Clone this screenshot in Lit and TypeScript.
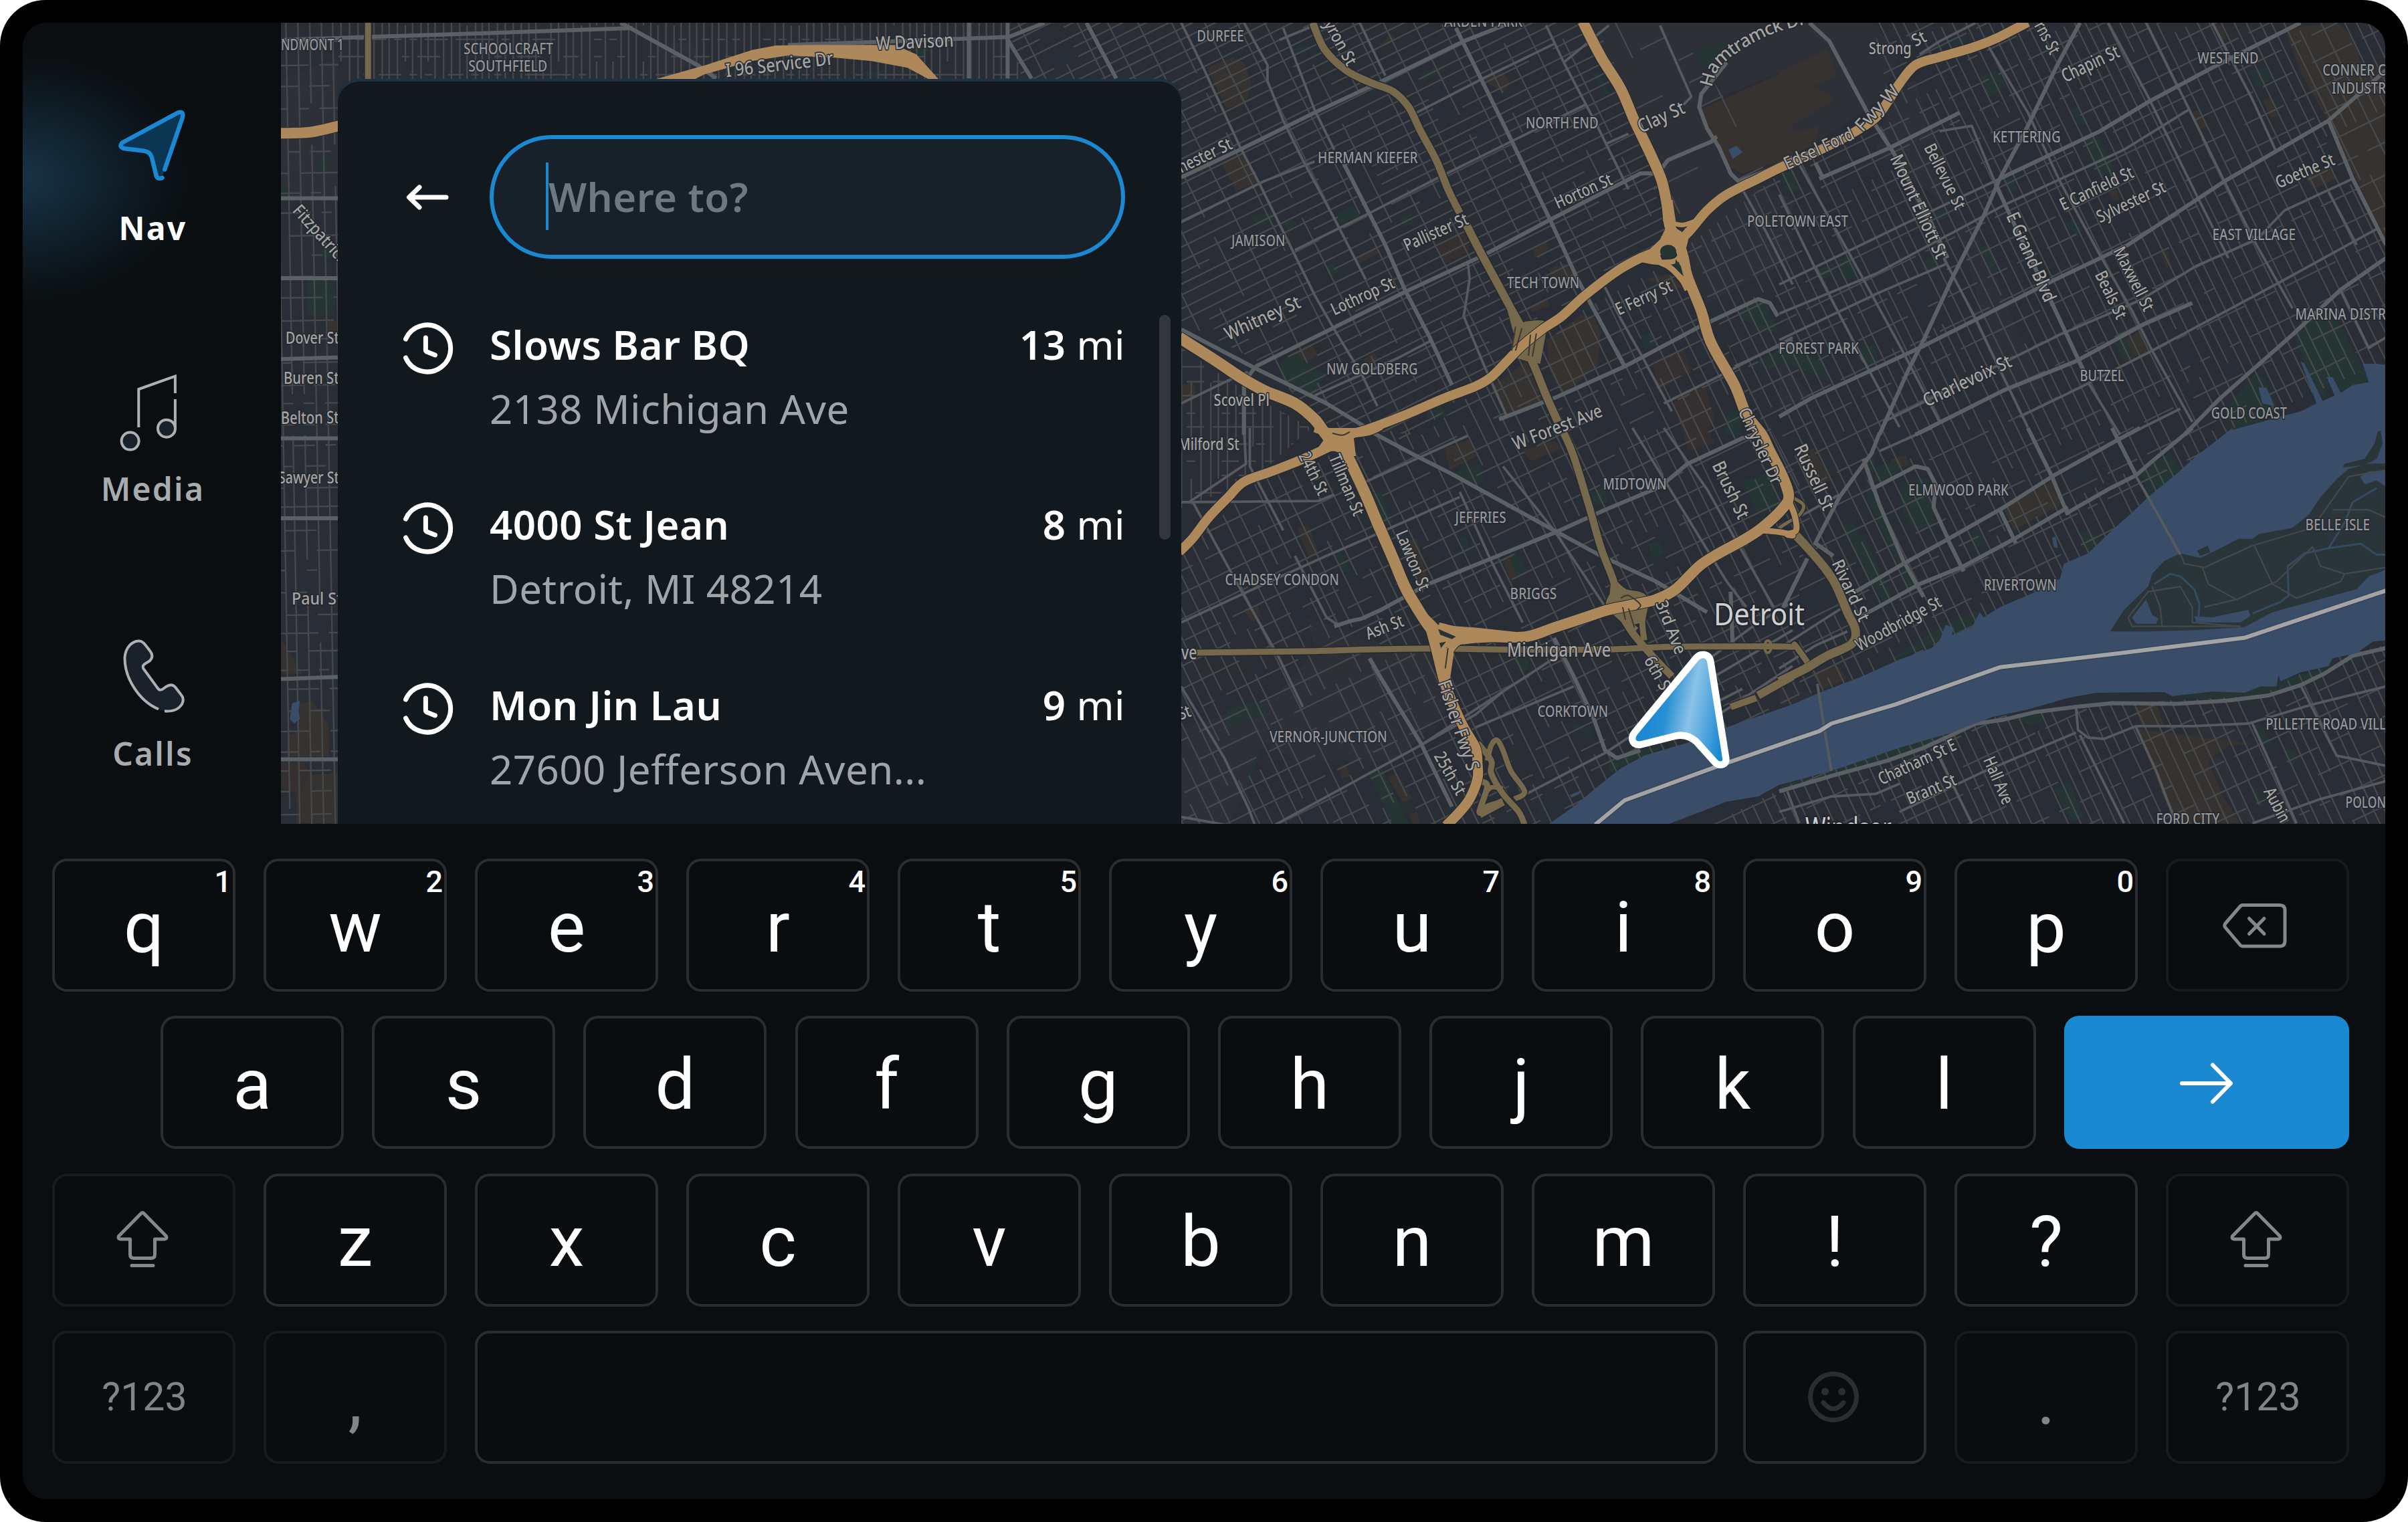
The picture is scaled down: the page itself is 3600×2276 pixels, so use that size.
import { LitElement, html, css, svg } from "lit";
import { customElement } from "lit/decorators.js";
import { classMap } from "lit/directives/class-map.js";

/* ------------------------------------------------------------------ */
/* Map geometry                                                        */
/* ------------------------------------------------------------------ */

type Pt = [number, number];

// Map sheets: origin and scale from sheet units to screen units.
const SHEETS: Record<string, [number, number, number, number]> = {
  A: [1760, 30, 920 / 1568, 620 / 1568],
  B: [2660, 30, 940 / 1568, 620 / 1568],
  C: [1760, 640, 920 / 1568, 600 / 1568],
  D: [2660, 640, 940 / 1568, 600 / 1568],
  T: [410, 28, 1400 / 1568, 1 / 3],
  L: [0, 0, 1 / 3, 1240 / 1568],
  S: [0, 0, 1, 1],
};

// "A 10,20 30,40 C 5,6" -> list of screen points; a letter switches sheet.
function points(src: string): Pt[] {
  let sheet = SHEETS.S;
  const out: Pt[] = [];
  for (const tok of src.trim().split(/\s+/)) {
    if (SHEETS[tok]) {
      sheet = SHEETS[tok];
      continue;
    }
    const [x, y] = tok.split(",").map(Number);
    out.push([sheet[0] + x * sheet[2], sheet[1] + y * sheet[3]]);
  }
  return out;
}

const n = (v: number) => v.toFixed(1);

function line(src: string, close = false): string {
  return "M" + points(src).map(([x, y]) => `${n(x)} ${n(y)}`).join("L") + (close ? "Z" : "");
}

function curve(src: string): string {
  const p = points(src);
  let d = `M${n(p[0][0])} ${n(p[0][1])}`;
  for (let i = 0; i < p.length - 1; i++) {
    const a = p[Math.max(0, i - 1)];
    const b = p[i];
    const c = p[i + 1];
    const e = p[Math.min(p.length - 1, i + 2)];
    d += `C${n(b[0] + (c[0] - a[0]) / 6)} ${n(b[1] + (c[1] - a[1]) / 6)} ${n(c[0] - (e[0] - b[0]) / 6)} ${n(
      c[1] - (e[1] - b[1]) / 6,
    )} ${n(c[0])} ${n(c[1])}`;
  }
  return d;
}

// Local streets: two families of broken parallel lines in a rotated frame.
function streets(
  box: [number, number, number, number],
  angle: number,
  stepU: number,
  stepV: number,
  skipU: number,
  skipV: number,
  seed: number,
): string {
  let s = seed;
  const rnd = () => ((s = (s * 16807) % 2147483647) / 2147483647);
  const [x0, y0, x1, y1] = box;
  const cx = (x0 + x1) / 2;
  const cy = (y0 + y1) / 2;
  const r = Math.hypot(x1 - x0, y1 - y0) / 2;
  const a = (angle * Math.PI) / 180;
  const ux = Math.cos(a);
  const uy = Math.sin(a);
  const at = (u: number, v: number): Pt => [cx + u * ux - v * uy, cy + u * uy + v * ux];
  const inside = ([x, y]: Pt) => x > x0 - 40 && x < x1 + 40 && y > y0 - 40 && y < y1 + 40;
  let d = "";
  const run = (step: number, cell: number, skip: number, vertical: boolean) => {
    for (let v = -r; v < r; v += step * (0.85 + rnd() * 0.3)) {
      let open = false;
      for (let u = -r; u < r; u += cell) {
        const p = vertical ? at(v, u) : at(u, v);
        const q = vertical ? at(v, u + cell) : at(u + cell, v);
        if (rnd() < skip || !inside(p)) {
          open = false;
          continue;
        }
        if (!open) d += `M${n(p[0])} ${n(p[1])}`;
        d += `L${n(q[0])} ${n(q[1])}`;
        open = true;
      }
    }
  };
  run(stepV, stepU, skipV, false);
  run(stepU, stepV * 2, skipU, true);
  return d;
}

const DISTRICTS = [
  { clip: "S 420,34 506,34 506,1232 420,1232", d: streets([400, 34, 520, 1232], -1, 15.7, 31, 0.08, 0.3, 11) },
  { clip: "S 506,34 1505,34 1530,125 506,125", d: streets([500, 20, 1540, 130], 0, 11.5, 27, 0.08, 0.5, 5) },
  {
    clip: "S 1505,34 2367,34 2480,250 2495,360 2300,490 2120,650 1990,640 1880,540 1766,480 1540,160",
    d: streets([1500, 20, 2520, 660], -26.5, 40, 16.5, 0.15, 0.1, 23),
  },
  { clip: "S 1766,520 1870,590 1960,640 1870,720 1766,760", d: streets([1760, 510, 1960, 770], 0, 13, 24, 0.1, 0.45, 8) },
  {
    clip: "S 1766,830 1880,720 1975,690 2040,640 2130,650 2300,500 2500,390 2560,480 2690,720 2690,1080 2480,1170 2330,1232 1766,1232",
    d: streets([1760, 380, 2700, 1240], -26, 20, 33, 0.2, 0.22, 31),
  },
  { clip: "S 2380,34 2500,34 2650,250 2500,360", d: streets([2380, 34, 2660, 380], -26, 44, 40, 0.6, 0.6, 41) },
  {
    clip: "S 2800,34 3566,34 3566,540 3340,640 3140,850 2900,1000 2690,1040 2690,760 2520,370 2660,260 2830,180",
    d: streets([2500, 20, 3580, 1060], -26, 16.5, 40, 0.1, 0.25, 57),
  },
  {
    clip: "S 2560,1232 2760,1130 2960,1075 3110,1055 3380,1040 3480,985 3566,965 3566,1232",
    d: streets([2500, 950, 3580, 1240], -25, 17, 40, 0.12, 0.28, 77),
  },
];

const LAND_TINT = [
  "A 1050,10 1568,10 1568,180 1400,280 1330,330 1360,450 1400,560 1568,680 1568,900 1330,1090 1300,900 1250,740 1170,400",
  "B 0,10 230,10 300,120 260,290 90,470 0,500",
  "B 290,240 340,230 400,500 450,740 330,600 240,500",
  "L 1260,150 1515,110 1515,372 1260,372",
  "C 330,740 480,830 640,870 690,1100 560,1300 300,1300 190,1200 10,1280 10,1180 250,1050 350,870",
  "C 10,1180 240,1150 170,1430 130,1550 10,1550",
  "B 440,760 480,760 660,1400 560,1400",
  "B 0,1280 80,1420 0,1500",
  "D 1000,1160 1190,1180 1070,1300 1150,1540 1190,1540 1110,1300",
  "D 0,1020 70,1030 100,1050 0,1090",
  "T 640,110 700,110 720,200 640,250",
];

const PARKS = [
  "A 285,115 335,90 345,110 290,140",
  "A 615,205 675,170 685,190 625,235",
  "A 410,730 440,700 470,740 410,775",
  "A 190,745 240,720 245,755 195,785",
  "A 270,765 295,750 305,775 280,795",
  "A 375,930 400,915 412,950 390,975",
  "A 570,745 595,730 605,770 575,785",
  "A 1070,190 1110,290 1090,280 1060,210",
  "A 1320,120 1400,80 1350,170 1330,190",
  "A 262,1290 300,1260 345,1310 380,1340 345,1425 270,1380",
  "A 1180,1195 1210,1180 1225,1230 1190,1245",
  "A 1430,1090 1500,1060 1520,1140 1530,1180 1500,1180 1440,1130",
  "A 1470,1290 1568,1230 1568,1290 1500,1325",
  "A 1270,900 1290,980 1275,960",
  "A 1400,1490 1430,1470 1440,1568 1395,1568",
  "A 635,1470 670,1450 690,1500 640,1510",
  "B 500,210 540,190 570,250 520,290",
  "B 755,440 790,420 840,570 800,600",
  "B 1170,190 1215,180 1230,220 1190,260",
  "B 725,340 745,330 765,390 750,400",
  "B 560,600 585,590 595,640 570,655",
  "B 500,860 520,850 545,950 530,960",
  "B 140,910 180,890 195,970 165,985",
  "B 100,940 135,920 145,955 110,980",
  "B 200,1240 235,1225 250,1295 215,1320",
  "B 0,1270 40,1250 110,1290 125,1370 70,1330 0,1290",
  "B 360,910 390,890 400,930 365,950",
  "B 1280,1180 1300,1130 1350,1070 1390,1130 1475,1370 1400,1410 1375,1350 1360,1430 1330,1380",
  "B 1140,1420 1190,1330 1215,1370 1240,1460 1200,1520 1130,1550 1110,1480",
  "B 835,1210 860,1195 885,1270 855,1290",
  "B 430,70 460,50 470,80 440,100",
  "B 0,580 30,570 60,640 20,650",
  "B 710,770 735,755 760,800 740,810",
  "B 385,730 415,710 420,750 395,760",
  "C 700,180 770,140 785,210 745,220",
  "C 495,260 520,245 550,370 525,380",
  "C 1440,210 1510,170 1530,310 1480,340",
  "C 1200,455 1230,440 1240,490 1210,510",
  "C 850,510 870,495 890,560 865,585",
  "C 400,480 415,475 440,560 420,565",
  "C 720,430 735,420 745,480 725,485",
  "C 125,1100 210,1065 230,1120 130,1160",
  "C 485,1350 520,1325 590,1550 550,1550",
  "C 1100,1300 1190,1255 1240,1245 1160,1300 1100,1350",
  "C 920,1500 980,1400 940,1480 900,1550",
  "C 1000,1150 1050,1170 1060,1210 1010,1170",
  "C 1050,250 1090,230 1095,290 1060,305",
  "C 160,1430 240,1140 200,1320",
  "C 865,900 890,890 900,940 870,960",
  "D 160,380 185,370 230,480 285,670 260,680 200,520",
  "D 205,110 240,100 230,240 345,620 325,630 220,280",
  "D 300,230 370,190 390,380 340,400 310,340",
  "D 900,170 975,95 1000,170 925,270",
  "D 240,150 290,130 300,190 240,210",
  "D 750,410 775,390 800,460 770,490",
  "D 270,910 380,800 480,720 500,720 500,760 420,820 330,880",
  "D 480,400 495,390 515,460 490,470",
  "D 1000,1050 1040,1030 1160,1030 1240,990 1370,930 1440,880 1513,850 1400,930 1280,1010 1120,1070",
  "D 0,1400 150,1330 300,1250 470,1160 300,1290 120,1360 0,1420",
  "D 685,1410 725,1385 760,1520 730,1540",
  "D 1180,1160 1200,1160 1230,1240 1205,1240",
  "D 1255,1260 1285,1260 1295,1300 1270,1315",
  "D 600,1130 650,1120 660,1150 620,1165",
  "D 1170,1400 1185,1400 1210,1480 1195,1480",
  "L 1427,296 1475,296 1475,325 1427,325",
  "L 1376,530 1502,530 1502,597 1376,597",
  "L 1262,345 1330,372 1262,372",
  "L 1435,470 1515,470 1515,488 1445,488",
  "T 990,235 1028,230 1028,270 990,270",
  "T 1060,130 1105,110 1085,165",
];

const BUILT = [
  "A 75,180 140,140 170,160 190,240 175,310 125,335",
  "A 112,540 165,500 205,615 150,645",
  "A 780,225 830,195 850,240 830,275",
  "A 515,95 545,55 560,70 530,95",
  "A 1330,340 1568,180 1568,520 1440,580 1410,560",
  "A 455,905 510,860 515,880 465,920",
  "A 905,860 940,835 945,870 910,900",
  "A 945,940 990,920 1010,960 960,990",
  "A 895,1085 940,1050 950,1080 905,1105",
  "A 300,1255 345,1230 360,1270 320,1295",
  "A 475,1285 500,1255 515,1285 480,1300",
  "A 800,1390 890,1290 920,1340 930,1440 835,1495",
  "A 940,1210 1030,1115 1060,1120 1080,1180 1070,1310 980,1420 950,1330",
  "A 10,1380 40,1370 50,1410 10,1450",
  "A 1190,980 1250,960 1290,1010 1260,1020",
  "B 0,200 120,110 145,210 85,250 140,300 30,400 0,390",
  "B 0,440 100,400 90,470 0,530",
  "B 1260,30 1390,10 1430,60 1450,160 1513,190 1513,840 1420,540 1365,370 1300,200",
  "B 1205,305 1225,295 1245,365 1225,370",
  "B 1030,345 1050,340 1070,405 1050,410",
  "B 1310,590 1370,550 1390,600 1330,640",
  "B 865,1205 900,1175 925,1250 855,1295",
  "B 950,880 965,870 980,930 965,935",
  "B 1085,15 1105,25 1115,70 1100,80",
  "B 820,650 840,640 850,680 835,685",
  "C 680,80 745,45 765,110 695,165",
  "C 880,90 960,50 980,80 900,130",
  "C 830,515 855,500 870,585 850,600",
  "C 305,390 335,380 360,490 335,505",
  "C 170,710 205,690 215,740 190,760",
  "C 590,440 610,430 640,600 615,610",
  "C 535,1365 560,1350 600,1450 575,1465",
  "C 410,1325 430,1315 440,1360 420,1370",
  "C 590,1510 610,1500 620,1550 600,1550",
  "D 560,315 680,205 705,300 585,400",
  "D 40,110 85,80 130,200 80,260",
  "D 885,1090 940,1080 960,1160 905,1165",
  "D 890,1175 1190,1235 1120,1240 1070,1300 1110,1450 1150,1545 985,1545",
  "D 80,960 140,920 170,980 110,1020",
  "D 275,125 315,105 325,140 290,170",
  "D 535,470 575,435 580,455 545,485",
  "L 1262,1208 1355,1274 1262,1274",
  "L 1290,1390 1340,1385 1345,1330 1400,1325 1475,1370 1475,1430 1290,1430",
  "L 1330,1500 1400,1465 1515,1462 1515,1557 1330,1557",
  "L 1470,606 1515,606 1515,628 1475,628",
];

const CAMPUS = [
  "A 660,850 735,795 745,870 680,925",
  "A 1210,1290 1290,1240 1310,1330 1225,1400",
  "A 1265,1450 1340,1370 1370,1500 1350,1568 1290,1568",
  "C 1290,20 1350,0 1370,60 1300,90",
  "L 1262,1442 1360,1442 1400,1465 1330,1500 1262,1490",
];

const MID_ROADS = [
  "A 10,10 60,160 160,480 210,620 290,860 350,1040 400,1170 470,1340 510,1460",
  "A 170,10 230,170 230,230 270,380 320,530 400,750 480,980",
  "A 270,30 350,340 400,490",
  "A 465,10 530,210",
  "A 940,20 985,160 1070,400 1150,640",
  "A 0,770 220,610 350,535",
  "A 300,870 490,730 660,600 850,460 1040,320",
  "A 610,350 780,220 960,90",
  "A 985,160 1100,20",
  "A 260,75 350,20",
  "A 10,1450 120,1370 180,1330",
  "A 740,910 745,980 730,1120 780,1300 840,1500",
  "A 1230,20 1310,290 1290,320",
  "A 1090,1010 1130,1130 1180,1260 1260,1480",
  "A 1420,1310 1568,1210",
  "A 350,1420 470,1340 560,1280 650,1210",
  "A 1090,470 1150,430",
  "A 1440,640 1500,800 1568,1000",
  "A 1240,1450 1390,1340 1568,1200",
  "C 480,210 610,120 740,30",
  "C 10,760 250,590 380,500 500,420 720,270",
  "C 10,290 360,285 400,260",
  "C 170,0 175,140 30,290",
  "C 185,0 185,150 270,400",
  "C 620,1240 760,1120 830,1030",
  "C 250,1550 620,1240",
  "C 760,1170 1010,1010",
  "C 10,1010 120,1290 180,1480 200,1560",
  "C 40,290 150,600 260,900 320,1090",
  "C 300,500 380,740 410,770",
  "C 720,250 800,520 880,760",
  "C 830,150 960,400 1100,720",
  "C 890,1430 1090,1270 1180,1180",
  "C 1160,0 1260,250 1400,600 1450,700",
  "C 1240,0 1350,240 1420,430 1520,700",
  "C 1350,1150 1568,930",
  "C 1370,970 1568,790",
  "C 1340,920 1480,760 1568,680",
  "C 1270,1020 1350,1090 1440,1020",
  "C 980,880 830,1030 620,1240",
  "C 10,1520 120,1550",
  "B 490,10 400,80 350,130",
  "B 820,10 920,290 1040,660 1120,900",
  "B 915,10 1010,300 1110,610 1190,850 1280,1090",
  "B 1080,10 1180,300 1240,500",
  "B 520,95 620,350 700,610 800,890 880,1100 930,1250 1030,1520",
  "B 0,1000 300,780 550,600",
  "B 0,1110 240,960 560,700 860,490 1020,340",
  "B 0,1210 250,1030 420,920",
  "B 260,1520 700,1190 900,1060 1040,930 1190,830 1260,720 1430,600",
  "B 600,1500 750,1390 930,1250 1250,990 1490,790",
  "B 0,660 90,940 180,1200 300,1540",
  "B 40,520 170,870 300,1230 400,1520",
  "B 410,900 490,1130 540,1290 620,1540",
  "B 400,420 480,400 540,620",
  "B 1370,650 1440,850",
  "B 1400,1020 1470,1240 1513,1200",
  "B 770,1370 850,1568",
  "B 870,1568 1000,1470",
  "D 890,1165 1030,1165 1170,1155 1330,1080 1513,1010",
  "D 1180,1155 1230,1330 1290,1545",
  "D 890,1170 940,1340 990,1545",
  "D 740,1090 745,1180 770,1210 810,1215 890,1165",
  "D 750,1200 860,1545",
  "D 300,1500 500,1350 740,1190",
  "D 0,1500 130,1440 240,1430 300,1390",
  "D 1300,1005 1390,1280 1513,1320",
  "D 1180,1545 1350,1450 1513,1380",
  "D 20,1420 50,1545",
  "D 400,1290 480,1545",
  "D 0,860 80,780 160,700",
  "D 0,940 90,850 170,795",
  "D 0,380 70,330 150,260",
  "D 380,0 250,90",
];

const MAJOR_ROADS = [
  "A 10,595 160,490 350,350 530,225 730,80 850,10",
  "A 200,1310 390,1170 585,1025 780,890 950,755 1180,580 1215,580",
  "A 1235,560 1250,530 1360,460 1375,440",
  "A 1400,160 1335,280 1330,330 1350,410 1380,480 1410,580 1430,610 1500,570 1568,520",
  "A 710,30 830,390 950,755 1020,980 1060,1090 1140,1310",
  "A 420,530 530,850 580,1020 640,1190 700,1380",
  "A 10,1170 190,1310 380,1450 480,1540",
  "A 820,1510 960,1430 1140,1310 1280,1200 1330,1160 1480,1055 1510,1070 1530,1120",
  "A 170,1370 170,1568",
  "A 200,1310 170,1370",
  "C 400,775 440,755 470,745 520,710 640,610 800,510 960,410 1090,320 1230,230 1300,140 1440,40 1500,10",
  "C 500,20 610,110 700,180 830,290 960,400 1080,500 1220,600 1350,720",
  "C 490,900 520,980 620,1230 700,1480",
  "C 960,820 1010,970 1060,1130 1090,1260 1120,1290 1180,1260",
  "C 1410,640 1415,840",
  "B 75,10 125,80 220,350 280,490 300,540 380,770 420,900",
  "B 750,10 690,180 620,400 550,600 510,740 430,980 360,1210 320,1330 250,1568",
  "B 100,600 280,480 450,350",
  "B 90,540 110,600",
  "B 540,620 570,720 620,880 680,1070 760,1330",
  "B 550,600 800,420 920,310 1080,180 1300,10",
  "B 0,1500 80,1430 350,1240 690,980 870,850 1110,610 1370,380 1513,190",
  "B 340,1568 560,1400 740,1290 910,1150 1030,1070",
  "B 1370,380 1430,600 1513,850",
  "B 1010,1568 1100,1430 1280,1190 1400,1020 1513,900",
  "D 190,640 310,530 420,435 560,310 680,190 840,50 900,0",
  "D 200,740 350,610 460,540 590,430 720,310",
  "D 720,330 820,240 890,185 930,130 1030,0",
  "D 620,0 680,190 720,340",
  "D 830,0 890,185",
  "D 550,320 590,450",
  "D 420,435 460,560",
  "D 210,120 250,300 310,520 360,660",
  "D 250,20 230,100 150,270 90,450 135,500",
  "D 70,510 10,700",
  "D 230,240 340,150 370,160 390,220 385,310 420,430",
  "D 0,1420 130,1360 270,1300 360,1250 430,1200 490,1155 560,1140 640,1110 740,1090 830,1075 990,1078 1120,1065 1220,1045 1300,1005 1360,960 1430,890 1513,860",
  "L 1260,375 1515,375",
  "L 1260,526 1515,526",
  "L 1260,679 1515,676",
  "L 1260,829 1515,829",
  "L 1260,980 1515,980",
  "L 1260,1284 1515,1280",
  "L 1260,1436 1515,1436",
  "T 12,95 157,82 350,65 600,42",
  "T 580,18 710,210 740,268",
  "T 860,118 1000,105 1230,82 1290,18",
  "T 1163,18 1163,268",
  "T 1228,18 1228,268",
  "T 1225,80 1268,268",
  "T 1360,18 1410,268",
];

const DIM_HIGHWAYS: [number, string][] = [
  [11, "A 345,10 375,110 430,190 490,235 550,270 590,330 620,420 660,530 690,640 720,730"],
  [12, "A 737,775 770,870 810,980 850,1090 875,1160 885,1230 910,1310 940,1420 970,1520"],
  [11, "C 985,20 1010,110 1050,310 1080,470 1110,590 1120,650 1130,720 1160,800 1210,890 1260,970"],
  [8, "A 850,1110 870,1180 852,1270"],
  [8, "A 885,1150 935,1150 925,1210 905,1300"],
  [9, "C 1110,600 1140,640 1190,665 1185,760 1190,830"],
  [9, "C 1115,640 1100,690 1130,740 1170,790"],
  [9, "C 50,878 350,872 500,865 660,862 850,866 1110,865 1250,855 1500,853 1568,855 D 40,850 70,915"],
  [13, "D 0,990 60,945 120,890 180,845 190,790 170,720 140,610 110,540 60,450 30,400"],
  [10, "C 1410,1090 1475,1055"],
  [12, "C 1480,1045 1568,970"],
  [5, "D 30,270 60,300 50,340 20,370 0,390"],
  [5, "C 1568,300 1530,350 1500,390"],
  [9, "T 157,18 157,200 157,270"],
  [9, "C 765,1230 800,1300 800,1350 830,1430 870,1500 885,1550"],
  [8, "C 790,1300 800,1240 815,1220 830,1260 850,1340 885,1420 860,1450"],
  [9, "C 770,1380 790,1400 770,1500 790,1480 830,1460"],
  [7, "C 780,1440 800,1405 830,1410"],
  [12, "C 770,1510 830,1460"],
];

const DIM_FILLS = [
  "A 838,1080 860,1140 935,1150 940,1180 925,1300 890,1290 848,1270 858,1190",
  "C 1105,600 1140,635 1190,660 1200,700 1185,760 1160,770 1105,720 1100,680",
];

const HIGHWAYS: [number, string][] = [
  [16, "A 1033,5 1080,140 1130,260 1165,380 1210,520 1235,610 1248,700 1255,780 1275,830 1290,900 1300,970 1335,1100 1360,1220 1420,1380 1450,1490 1490,1568 C 1510,90 1540,180 1558,260 1545,310 1490,390 1440,440 1380,490 1330,540 1270,630 1220,670 1180,685 1100,710 1040,740 960,780 890,815 800,815 720,800 665,780"],
  [14, "B 620,8 540,70 480,105 400,140 340,170 300,240 270,310 240,370 180,430 90,500 0,560 A 1480,600 1400,660 1350,720 1310,790 1275,840 1230,870 1180,900 1120,950 1040,1040 980,1120 930,1170 880,1230 840,1290 800,1350 760,1385 680,1430 570,1500 480,1550 430,1568"],
  [17, "A 5,1200 100,1290 160,1350 220,1400 300,1450 350,1510 380,1568 C 415,60 440,130 480,260 510,370 550,510 580,620 610,700 650,790 690,820"],
  [14, "C 420,50 330,115 240,170 170,210 130,270 80,350 40,430 5,485"],
  [15, "C 645,780 662,880 680,990 700,1070 730,1170 760,1250 765,1310 765,1370 745,1450 720,1500 685,1555"],
  [12, "C 760,800 710,840 690,890 680,980"],
  [9, "C 1490,400 1540,408 1568,420 D 20,415 42,400 38,340 20,270 0,170"],
  [8, "A 1300,790 1290,860 1270,910 1220,915 1180,905"],
  [9, "A 1200,900 1250,930 1285,980 1300,1020"],
  [16, "L 1255,252 1390,250 1520,238"],
  [7, "A 1245,760 1285,775 1320,760"],
  [13, "C 350,0 400,20 480,15 520,-10"],
];

const HIGHWAY_FILLS = [
  "T 640,270 720,210 800,140 840,120 900,118 1040,118 1075,160 1112,270 1095,270 1060,220 1000,190 940,175 860,165 800,190 720,250 705,270",
  "C 355,0 510,0 450,40 455,110 440,110 400,90 350,95 372,50",
  "C 600,700 620,700 665,770 760,780 880,800 960,780 900,830 760,840 700,850 660,870 640,800",
  "C 650,850 690,860 705,880 695,980 665,980",
  "A 1180,900 1230,830 1250,770 1285,800 1285,835 1255,838 1225,870 1240,925",
  "A 1235,680 1262,680 1270,760 1250,800 1238,760",
];

const RIVER =
  "C 940,1555 1010,1480 1080,1390 1130,1330 1190,1280 1300,1230 1400,1170 1568,1080 D 100,1035 200,975 300,905 380,860 400,830 415,770 435,780 430,810 480,780 500,720 510,740 550,700 640,640 700,590 710,530 740,510 770,490 830,400 880,330 920,270 990,180 1040,110 1090,50 1130,0 B 1130,1550 1250,1500 1300,1480 1340,1450 1300,1290 1310,1300 1355,1440 1385,1420 1365,1350 1380,1350 1400,1410 1430,1380 1470,1370 1455,1300 1490,1300 1520,1305 D 1520,828 1480,835 1440,880 1380,900 1370,930 1300,955 1250,990 1245,965 1240,1010 1200,1010 1160,1035 1080,1030 980,1048 960,1032 790,1035 720,1055 620,1100 530,1130 430,1190 300,1250 150,1330 60,1370 0,1395 C 1480,1440 1400,1460 1300,1520 1240,1555";

const WATERS = [
  "B 1195,1390 1215,1390 1235,1460 1205,1450",
  "D 680,430 690,425 695,470 685,465",
  "A 1405,490 1425,475 1440,500 1415,525",
  "C 1000,1435 1030,1415 1025,1430 1005,1445",
  "L 1300,1360 1310,1330 1345,1325 1340,1345 1345,1360 1320,1368",
];

const ISLAND = [
  "D 825,795 860,710 920,620 930,570 960,520 1000,490 1050,508 1100,470 1145,433 1180,433 1195,415 1280,390 1320,340 1350,270 1390,200 1420,160 1470,140 1520,138 1520,550 1470,580 1440,630 1300,690 1230,720 1160,778 1040,790 920,795",
  "D 1405,155 1410,140 1460,120 1485,60 1492,15 1500,10 1505,60 1490,120 1460,145",
  "D 1042,480 1068,460 1075,485 1050,500",
];

const LAGOONS = [
  "D 880,740 915,670 930,730 945,745 940,765 890,765",
  "D 1035,735 1080,740 1170,710 1175,735 1150,760 1040,760",
  "D 1448,190 1470,170 1513,165 1513,230 1490,205 1460,220",
];

const CANALS = [
  "D 935,610 975,570 1000,580 1035,630 1048,690 1045,740",
  "D 1180,725 1250,680 1270,655 1268,540 1310,490 1370,470 1450,452 1490,495 1513,495",
  "D 1370,470 1410,370 1430,290 1490,235",
];

const ISLAND_ROADS = [
  "D 1000,490 1010,530 1060,545 1180,460 1330,390 1420,190 1513,165",
  "D 870,740 920,640 1000,620 1030,700 1030,760 1150,775 880,775 870,740",
  "D 1055,545 1070,610 1140,670 1060,700",
  "D 1140,670 1240,600 1330,465 1350,540 1410,570 1513,545",
  "D 1185,460 1230,610 1290,665 1400,600 1410,570",
  "D 930,620 950,700 955,775",
  "D 1380,320 1470,320 1513,350",
];

/* Labels: text, start and end of the baseline, type size. */
const PLACES: [string, string, number][] = [
  ["DURFEE", "A 50,80 170,80", 23],
  ["ARDEN PARK", "A 680,25 880,25", 23],
  ["HERMAN KIEFER", "A 358,542 613,542", 23],
  ["NORTH END", "A 888,410 1073,410", 23],
  ["JAMISON", "A 138,855 275,855", 23],
  ["TECH TOWN", "A 840,1013 1025,1013", 23],
  ["NW GOLDBERG", "A 380,1340 613,1340", 23],
  ["POLETOWN EAST", "S 2612,339 2763,339", 23],
  ["FOREST PARK", "S 2659,529 2779,529", 23],
  ["KETTERING", "B 532,463 702,463", 23],
  ["WEST END", "B 1043,163 1195,163", 23],
  ["CONNER C", "B 1355,210 1513,210", 23],
  ["INDUSTR", "B 1378,277 1513,277", 23],
  ["EAST VILLAGE", "B 1080,832 1288,832", 23],
  ["MARINA DISTR", "B 1287,1132 1513,1132", 23],
  ["BUTZEL", "B 750,1365 860,1365", 23],
  ["GOLD COAST", "B 1077,1508 1266,1508", 23],
  ["MIDTOWN", "C 1085,240 1247,240", 23],
  ["JEFFRIES", "C 708,370 838,370", 23],
  ["CHADSEY CONDON", "C 122,615 412,615", 23],
  ["BRIGGS", "C 848,668 967,668", 23],
  ["CORKTOWN", "C 918,1130 1098,1130", 23],
  ["VERNOR-JUNCTION", "C 235,1228 535,1228", 23],
  ["ELMWOOD PARK", "D 322,265 572,265", 23],
  ["RIVERTOWN", "D 510,635 692,635", 23],
  ["BELLE ISLE", "D 1312,400 1473,400", 23],
  ["PILLETTE ROAD VILL", "D 1213,1178 1513,1178", 23],
  ["POLON", "D 1412,1483 1513,1483", 23],
  ["FORD CITY", "D 940,1550 1098,1550", 23],
  ["NDMONT 1", "S 420,75 514,75", 23],
  ["SCHOOLCRAFT", "T 317,160 467,160", 23],
  ["SOUTHFIELD", "T 325,238 457,238", 23],
];

const STREETS: [string, string, number][] = [
  ["Scovel Pl", "A 93,1458 235,1458", 26],
  ["Milford St", "C 3,85 158,85", 26],
  ["ve", "C 10,903 50,903", 28],
  ["Michigan Ave", "C 840,893 1105,893", 28],
  ["W Davison", "T 1008,140 1138,125", 28],
  ["I 96 Service Dr", "T 757,262 937,205", 28],
  ["Dover St", "S 427,514 507,514", 26],
  ["Buren St", "S 424,574 507,574", 26],
  ["Belton St", "S 420,634 507,633", 26],
  ["Sawyer St", "S 416,723 507,723", 26],
  ["Paul St", "S 436,904 512,904", 26],
  ["Fitzpatrick", "S 436,316 510,397", 26],
  ["Pallister St", "A 585,875 745,770", 26],
  ["Lothrop St", "A 400,1118 557,1010", 26],
  ["Whitney St", "A 130,1212 318,1085", 28],
  ["Horton St", "A 970,715 1112,620", 26],
  ["nester St", "A 10,580 143,485", 26],
  ["Clay St", "A 1182,428 1297,350", 28],
  ["yron St", "A 372,15 433,178", 26],
  ["E Ferry St", "A 1125,1118 1265,1022", 26],
  ["W Forest Ave", "C 862,88 A 1087,1497", 28],
  ["Chrysler Dr", "A 1428,1478 C 1515,225", 26],
  ["Brush St", "C 1362,145 1430,362", 28],
  ["24th St", "C 308,108 360,268", 26],
  ["Tillman St", "C 385,115 450,348", 26],
  ["Lawton St", "C 556,412 618,640", 26],
  ["Ash St", "C 487,828 580,772", 26],
  ["3rd Ave", "C 1218,685 1270,890", 26],
  ["6th St", "C 1188,908 1240,1050", 26],
  ["Fisher Fwy S", "C 663,995 740,1345", 28],
  ["25th St", "C 653,1282 712,1440", 26],
  ["St", "C 8,1142 38,1125", 26],
  ["Strong", "B 223,130 330,130", 26],
  ["St", "B 340,102 370,78", 26],
  ["Mount Elliott St", "B 275,522 392,908", 28],
  ["Bellevue St", "B 360,482 440,722", 26],
  ["E Grand Blvd", "B 565,740 662,1072", 28],
  ["E Canfield St", "B 708,722 887,592", 26],
  ["Sylvester St", "B 800,768 967,647", 26],
  ["Goethe St", "B 1245,638 1388,545", 26],
  ["Chapin St", "B 713,237 852,137", 28],
  ["rns St", "B 635,20 676,135", 26],
  ["Maxwell St", "B 832,872 910,1106", 26],
  ["Beals St", "B 786,962 842,1136", 26],
  ["Charlevoix St", "B 368,1464 583,1308", 28],
  ["Russell St", "D 36,78 110,328", 28],
  ["Rivard St", "D 130,528 200,762", 26],
  ["Woodbridge St", "D 200,874 408,695", 26],
  ["Chatham St E", "D 255,1396 445,1255", 26],
  ["Brant St", "D 325,1473 445,1393", 26],
  ["Hall Ave", "D 508,1297 558,1476", 26],
  ["Aubin", "D 1207,1420 1250,1548", 26],
  ["Edsel Ford", "B 20,568 190,448", 27],
  ["Fwy W", "B 208,426 302,272", 27],
];

const CITIES: [string, string, number][] = [
  ["Detroit", "S 2562,935 2698,935", 46],
  ["Windsor", "D 65,1606 280,1606", 46],
];

const label = (kind: string) => ([text, base, size]: [string, string, number]) => {
  const [a, b] = points(base);
  const len = Math.hypot(b[0] - a[0], b[1] - a[1]);
  const deg = (Math.atan2(b[1] - a[1], b[0] - a[0]) * 180) / Math.PI;
  return svg`<text class=${kind} font-size=${size} textLength=${n(len)} lengthAdjust="spacingAndGlyphs"
    transform="translate(${n(a[0])} ${n(a[1])}) rotate(${n(deg)})">${text}</text>`;
};

@customElement("city-map")
class CityMap extends LitElement {
  static styles = css`
    :host { display: block; width: 100%; height: 100%; }
    svg { display: block; width: 100%; height: 100%; background: #282d36; }
    .tint { fill: #2e3038; }
    .park { fill: #243534; }
    .built { fill: #35322f; }
    .campus { fill: #362f2f; }
    .water { fill: #3a4d68; }
    .island { fill: #2a3539; }
    .local { stroke: #45494c; stroke-width: 2.3; }
    .mid { stroke: #565a5e; stroke-width: 3.8; }
    .major { stroke: #5b6064; stroke-width: 6; }
    .local, .mid, .major, .dim, .bright, .case, .canal, .path, .border, .bridge { fill: none; stroke-linejoin: round; }
    .case { stroke: #262a31; }
    .dim { stroke: #76684a; }
    .dim-fill { fill: #76684a; }
    .bright { stroke: #ac885a; }
    .bright-fill { fill: #ac885a; }
    .canal { stroke: #344a60; stroke-width: 3; }
    .path { stroke: #45484a; stroke-width: 2.2; }
    .bridge { stroke: #555a5e; stroke-width: 4; }
    .border { stroke: #a5a4a4; stroke-width: 6; }
    .border-case { fill: none; stroke: #35455c; stroke-width: 9; }
    .slot { fill: none; stroke: #3d3930; stroke-width: 2; }
    text { font-family: "Noto Sans", sans-serif; font-weight: 500; paint-order: stroke; stroke: #23272d; stroke-width: 3; stroke-linejoin: round; }
    .place { fill: #94969a; }
    .street { fill: #a5a4a2; }
    .city { fill: #cfd0d0; stroke-width: 5; font-weight: 400; }
    .glyph { fill: url(#beam); stroke: #fff; stroke-width: 10.5; stroke-linejoin: round; }
  `;

  render() {
    return html`<svg viewBox="420 34 3146 1198" preserveAspectRatio="none">
      <defs>
        ${DISTRICTS.map((g, i) => svg`<clipPath id="district-${i}"><path d=${line(g.clip, true)}></path></clipPath>`)}
        <linearGradient id="beam" gradientUnits="userSpaceOnUse" x1="2466" y1="1070" x2="2582" y2="1092">
          <stop offset="0" stop-color="#1b89d2"></stop>
          <stop offset=".2" stop-color="#2a90d3"></stop>
          <stop offset=".5" stop-color="#8bc2e8"></stop>
          <stop offset=".62" stop-color="#6fb4e2"></stop>
          <stop offset=".95" stop-color="#1b89d2"></stop>
        </linearGradient>
      </defs>
      ${LAND_TINT.map((p) => svg`<path class="tint" d=${line(p, true)}></path>`)}
      ${BUILT.map((p) => svg`<path class="built" d=${line(p, true)}></path>`)}
      ${CAMPUS.map((p) => svg`<path class="campus" d=${line(p, true)}></path>`)}
      ${PARKS.map((p) => svg`<path class="park" d=${line(p, true)}></path>`)}
      ${DISTRICTS.map((g, i) => svg`<path class="local" clip-path="url(#district-${i})" d=${g.d}></path>`)}
      ${MID_ROADS.map((p) => svg`<path class="mid" d=${line(p)}></path>`)}
      ${MAJOR_ROADS.map((p) => svg`<path class="major" d=${line(p)}></path>`)}
      <path class="water" d=${line(RIVER, true)}></path>
      ${WATERS.map((p) => svg`<path class="water" d=${line(p, true)}></path>`)}
      ${ISLAND.map((p) => svg`<path class="island" d=${line(p, true)}></path>`)}
      ${LAGOONS.map((p) => svg`<path class="water" d=${line(p, true)}></path>`)}
      ${CANALS.map((p) => svg`<path class="canal" d=${line(p)}></path>`)}
      ${ISLAND_ROADS.map((p) => svg`<path class="path" d=${line(p)}></path>`)}
      <path class="bridge" d=${line("D 95,1000 110,1150 130,1340")}></path>
      <path class="bridge" d=${line("D 890,190 920,270 1000,495")}></path>
      <path class="border-case" d=${line("C 1065,1550 1140,1455 1380,1320 1568,1220 D 100,1185 130,1155 290,1080 550,935 850,880 1160,820 1520,632")}></path>
      <path class="border" d=${line("C 1065,1550 1140,1455 1380,1320 1568,1220 D 100,1185 130,1155 290,1080 550,935 850,880 1160,820 1520,632")}></path>
      ${DIM_HIGHWAYS.map(([w, p]) => svg`<path class="case" stroke-width=${w + 3} d=${curve(p)}></path>`)}
      ${DIM_FILLS.map((p) => svg`<path class="dim-fill" d=${line(p, true)}></path>`)}
      ${DIM_HIGHWAYS.map(([w, p]) => svg`<path class="dim" stroke-width=${w} d=${curve(p)}></path>`)}
      <ellipse class="dim" stroke-width="4" cx="2643" cy="967" rx="5" ry="9"></ellipse>
      ${HIGHWAYS.map(([w, p]) => svg`<path class="case" stroke-width=${w + 2} d=${curve(p)}></path>`)}
      ${HIGHWAY_FILLS.map((p) => svg`<path class="bright-fill" d=${line(p, true)}></path>`)}
      ${HIGHWAYS.map(([w, p]) => svg`<path class="bright" stroke-width=${w} d=${curve(p)}></path>`)}
      <ellipse class="park" cx="2494" cy="376" rx="12" ry="10"></ellipse>
      <path class="park" d=${line("A 1270,905 1283,930 1290,970 1268,935", true)}></path>
      <path class="park" d=${line("C 665,785 710,815 700,825 670,808", true)}></path>
      <path class="park" d=${line("C 668,840 685,835 672,860", true)}></path>
      ${[
        "A 862,1160 852,1250",
        "A 878,1165 862,1250",
        "A 900,1190 895,1270",
        "A 915,1185 905,1272",
        "C 1135,700 1142,750",
        "C 1150,705 1165,780",
        "C 1130,665 1150,655 1180,690 1172,710",
        "C 395,20 420,28 440,15",
        "C 690,860 683,940",
      ].map((p) => svg`<path class="slot" d=${curve(p)}></path>`)}
      ${PLACES.map(label("place"))}
      ${STREETS.map(label("street"))}
      <path id="hamtramck" fill="none" d=${curve("A 1362,255 1380,185 1425,125 1500,62 1568,28 1620,10")}></path>
      <text class="street" font-size="27" letter-spacing="-.9"><textPath href="#hamtramck">Hamtramck Dr</textPath></text>
      ${CITIES.map(label("city"))}
      <path class="glyph" d="M2534 986 Q2540 978 2547 979 Q2556 980 2557.500 990 L2580 1132 Q2582 1142 2574 1143.500 Q2568 1145 2563 1139 L2536 1109 Q2521 1096 2503 1101 L2453 1113.500 Q2443 1115 2440.500 1107 Q2439 1101 2444 1095 Z"></path>
    </svg>`;
  }
}

/* ------------------------------------------------------------------ */
/* Side rail                                                           */
/* ------------------------------------------------------------------ */

@customElement("side-rail")
class SideRail extends LitElement {
  static styles = css`
    :host {
      display: flex; flex-direction: column; box-sizing: border-box; padding-top: 120px; min-height: 0; overflow: hidden;
      font: 600 48px/66px "Noto Sans", sans-serif; letter-spacing: 2.2px;
      background: radial-gradient(ellipse 255px 190px at 0 232px, #183345 0%, #132836 30%, #0e1b24 62%, #0a0e10 100%) #0a0e10;
    }
    .item { flex: none; height: 393px; display: flex; flex-direction: column; align-items: center; color: #a9acaf; padding-left: 3px; }
    .active { color: #fff; font-weight: 700; }
    svg { width: 120px; height: 120px; margin-bottom: 34px; overflow: visible; }
    .item:nth-child(2) svg { margin-bottom: 31px; }
    .nav { fill: #0a3653; stroke: #1b89d2; stroke-width: 6.5; stroke-linecap: round; stroke-linejoin: round; }
    .line { fill: none; stroke: #aeb1b4; stroke-width: 4; }
    .solid { fill: #19212a; stroke: #aeb1b4; stroke-width: 4; }
    .bare { fill: #19212a; }
    .nav-fill { fill: #0a3653; }
  `;

  render() {
    return html`
      <div class="item active">
        <svg viewBox="168 154 120 120">
          <path class="nav-fill" d="M245 254 274 172 182 217 216 226 227 236 236 267Z"></path>
          <path class="nav" d="M245.200 253.500 271.800 176 Q274.500 165.500 265 168.500 L181.500 213.500 Q176.500 219.500 184 222 L213 225.400 Q223.500 226.500 225.800 235 L232.600 262.500 Q234.500 268.800 241.500 266"></path>
        </svg>
        <span>Nav</span>
      </div>
      <div class="item">
        <svg viewBox="168 547 120 120">
          <circle class="solid" cx="193.600" cy="659.600" r="13"></circle>
          <circle class="solid" cx="248" cy="640.700" r="13"></circle>
          <path class="line" d="M206.300 639 V582 L260.900 562.500 V588 M260.900 597 V641"></path>
        </svg>
        <span>Media</span>
      </div>
      <div class="item">
        <svg viewBox="168 940 120 120">
          <path class="bare" d="M236 1060.500 C208 1049 185 1015 185.500 983 C187 963 203 957 210 959 C216 961 228 978 226.500 983 C225 990 208 992 214 1001 L234 1029 C240 1036 246 1024 255 1025 C262 1026 275 1043 272.500 1049 C270 1060 257 1065 245 1063.300Z"></path>
          <path class="line" d="M236 1060.500 C208 1049 185 1015 185.500 983 C187 967 197 959 206 958.500 C213 958 216 964 224 974.500 C228 980 227 984 223 988 C219 992 210 993 213.500 1000 L234 1028 C237 1033.500 241 1032 245 1028.500 C251 1024 257 1023 261 1027.500 C265 1033 268 1036 271.500 1041.500 C274 1046 273 1049 271 1053 C266 1061 256 1064.500 245 1063.300"></path>
        </svg>
        <span>Calls</span>
      </div>
    `;
  }
}

/* ------------------------------------------------------------------ */
/* Search panel                                                        */
/* ------------------------------------------------------------------ */

const RECENTS = [
  { name: "Slows Bar BQ", address: "2138 Michigan Ave", distance: 13 },
  { name: "4000 St Jean", address: "Detroit, MI 48214", distance: 8 },
  { name: "Mon Jin Lau", address: "27600 Jefferson Aven...", distance: 9 },
];

@customElement("search-panel")
class SearchPanel extends LitElement {
  static styles = css`
    :host {
      display: block; box-sizing: border-box; border-radius: 32px 32px 0 0; background: #11181e;
      box-shadow: inset 0 4px 0 #203242; padding: 84px 84px 0 96px; overflow: hidden;
      font: 400 60px/96px "Noto Sans", sans-serif; letter-spacing: 0.45px; color: #fff;
    }
    .head { display: flex; align-items: center; gap: 55px; height: 185px; }
    .back { width: 76px; height: 76px; flex: none; }
    .back path { fill: none; stroke: #fff; stroke-width: 7; stroke-linecap: round; stroke-linejoin: round; }
    .field {
      flex: 1; box-sizing: border-box; height: 185px; border: 6px solid #1b89d2; border-radius: 93px;
      background: #18202a; display: flex; align-items: center; padding: 0 0 2px 78px;
      color: #6d7881; font-weight: 600; letter-spacing: 0.4px;
    }
    .caret { width: 4px; height: 101px; background: #1b89d2; }
    .list { display: flex; flex-direction: column; margin-top: 80px; }
    .row { display: grid; grid-template-columns: 131px 1fr auto; height: 269.4px; align-content: start; }
    .clock { width: 80px; height: 80px; margin: 14px 0 0 -2px; }
    .clock path { fill: none; stroke: #fff; stroke-width: 7; stroke-linejoin: round; }
    .name, .num { font-weight: 600; }
    .address { grid-column: 2 / 4; color: #a2a5a8; }
    .bar { position: absolute; right: 16px; top: 353px; width: 17px; height: 336px; border-radius: 9px; background: #33363e; }
  `;

  render() {
    return html`
      <div class="head">
        <svg class="back" viewBox="601 257 76 76"><path d="M667 295 H612 M627 280 611.500 295 627 310"></path></svg>
        <div class="field"><span class="caret"></span><span>Where to?</span></div>
      </div>
      <div class="list">
        ${RECENTS.map(
          (r) => html`<div class="row">
            <svg class="clock" viewBox="599 482 80 80">
              <path stroke-linecap="round" d="M606.600 508 A35 35 0 1 1 606.600 536"></path>
              <path stroke-linecap="round" d="M636.400 506 V524.500 Q636.400 526 638 527 L650.500 532"></path>
            </svg>
            <span class="name">${r.name}</span>
            <span><span class="num">${r.distance}</span> mi</span>
            <span class="address">${r.address}</span>
          </div>`,
        )}
      </div>
      <div class="bar"></div>
    `;
  }
}

/* ------------------------------------------------------------------ */
/* Keyboard                                                            */
/* ------------------------------------------------------------------ */

interface Key {
  text?: string;
  hint?: string;
  icon?: "back" | "shift" | "smile" | "go";
  kind?: string;
}

const chars = (s: string): Key[] => [...s].map((text) => ({ text }));

const ROWS: Key[][] = [
  [...[..."qwertyuiop"].map((text, i) => ({ text, hint: String((i + 1) % 10) })), { icon: "back", kind: "faint" }],
  [...chars("asdfghjkl"), { icon: "go", kind: "go" }],
  [{ icon: "shift", kind: "faint" }, ...chars("zxcvbnm!?"), { icon: "shift", kind: "faint" }],
  [
    { text: "?123", kind: "faint small" },
    { text: ",", kind: "faint" },
    { kind: "space" },
    { icon: "smile" },
    { text: ".", kind: "faint" },
    { text: "?123", kind: "faint small" },
  ],
];

@customElement("touch-keyboard")
class TouchKeyboard extends LitElement {
  static styles = css`
    :host {
      display: flex; flex-direction: column; gap: 36.4px; box-sizing: border-box;
      padding: 52px 54px 0 44px; background: #0a0e10; font-family: Roboto, sans-serif; color: #fff;
    }
    .row { display: flex; gap: 42px; height: 199px; }
    .row.second { padding-left: 162px; gap: 42.2px; }
    .key {
      flex: none; width: 274px; height: 199px; box-sizing: border-box; border: 4px solid #2a2d2f; border-radius: 22px;
      display: flex; align-items: center; justify-content: center; position: relative;
      font-size: 106px; line-height: 124px; padding-top: 6px; background: #0a0d0f;
    }
    .faint { border-color: #181b1d; color: #828486; }
    .small { font-size: 59px; padding: 0 0 1px 2px; }
    .space { width: 1858px; margin-right: -4px; }
    .go { width: auto; flex: 1; border: 0; background: #1b89d2; }
    .hint { position: absolute; right: 2px; top: 4px; font-size: 45px; line-height: 53px; font-weight: 500; }
    svg { width: 110px; height: 110px; fill: none; stroke-linecap: round; stroke-linejoin: round; margin: -6px 5px 0 0; }
    .gray { stroke: #858789; stroke-width: 5; }
    .dark { stroke: #2b2e30; stroke-width: 7; }
    .eye { fill: #2b2e30; stroke: none; }
    .white { stroke: #fff; stroke-width: 6; }
  `;

  private icon(name?: string) {
    switch (name) {
      case "back":
        return html`<svg viewBox="-52 -55 110 110"><path class="gray" d="M-17 -30.500 H38 Q46 -30.500 46 -23 V23 Q46 31 38 31 H-17 Q-19.500 31 -21.500 28.500 L-43.500 2.500 Q-45 0 -43.500 -2.500 L-21.500 -28 Q-19.500 -30.500 -17 -30.500Z M-7.500 -10.500 15 12.500 M15 -10.500 -7.500 12.500"></path></svg>`;
      case "shift":
        return html`<svg viewBox="-55 -55 110 110"><path class="gray" d="M-2.500 -39 Q0 -42 2.500 -39 L35.500 -5.500 Q37.500 -1.500 33 -1 H18.500 V22 Q18.500 27.500 13 27.500 H-13 Q-18.500 27.500 -18.500 22 V-1 H-33 Q-37.500 -1.500 -35.500 -5.500Z M-16 38.500 H16"></path></svg>`;
      case "smile":
        return html`<svg viewBox="-55 -55 110 110"><circle class="dark" cx="0" cy="-1" r="34.500"></circle><circle class="eye" cx="-12.500" cy="-9" r="5.500"></circle><circle class="eye" cx="12.500" cy="-9" r="5.500"></circle><path class="dark" stroke-width="6" d="M-15 7.500 Q0 26 15 7.500"></path></svg>`;
      case "go":
        return html`<svg viewBox="-55 -55 110 110"><path class="white" d="M-34 1 H39 M12 -26.500 39 1 12 28.500"></path></svg>`;
    }
    return null;
  }

  render() {
    return ROWS.map(
      (row, i) => html`<div class=${classMap({ row: true, second: i === 1 })}>
        ${row.map(
          (k) => html`<div class="key ${k.kind ?? ""}">
            ${k.text ?? this.icon(k.icon)}${k.hint ? html`<span class="hint">${k.hint}</span>` : null}
          </div>`,
        )}
      </div>`,
    );
  }
}

/* ------------------------------------------------------------------ */
/* Head unit                                                           */
/* ------------------------------------------------------------------ */

@customElement("app-root")
class AppRoot extends LitElement {
  static styles = css`
    :host { display: block; width: 3600px; height: 2276px; background: #fff; }
    .bezel { box-sizing: border-box; width: 3600px; height: 2276px; padding: 34px; background: #000; border-radius: 68px; }
    .screen {
      height: 2208px; display: grid; grid-template: 1198px 1fr / 386px 1fr; overflow: hidden;
      border-radius: 36px; background: #0a0e10;
    }
    .stage { position: relative; overflow: hidden; }
    search-panel { position: absolute; left: 85px; top: 84px; width: 1261px; height: 1114px; }
    touch-keyboard { grid-column: 1 / 3; }
  `;

  render() {
    return html`<div class="bezel">
      <div class="screen">
        <side-rail></side-rail>
        <div class="stage">
          <city-map></city-map>
          <search-panel></search-panel>
        </div>
        <touch-keyboard></touch-keyboard>
      </div>
    </div>`;
  }
}
